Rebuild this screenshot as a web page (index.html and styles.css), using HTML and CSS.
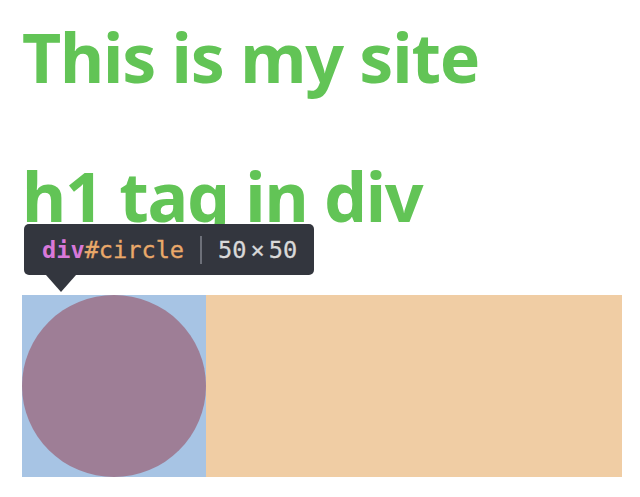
FILE: index.html
```html
<!DOCTYPE html>
<html>
<head>
<meta charset="utf-8">
<link rel="stylesheet" href="styles.css">
</head>
<body>
<main class="page">
  <h1 class="title">This is my site</h1>
  <div class="wrap">
    <h1 class="title second">h1 tag in div</h1>
  </div>
  <div class="row">
    <div class="content">
      <div class="circle"></div>
    </div>
    <div class="margin"></div>
  </div>
</main>
<div class="tip">
  <span class="sel"><span class="tag">div</span><span class="id">#circle</span></span>
  <span class="sep"></span>
  <span class="dim">50<span class="x">×</span>50</span>
  <span class="arrow"></span>
</div>
</body>
</html>
```
FILE: styles.css
```css
html, body {
  margin: 0;
  padding: 0;
  background: #ffffff;
}
.page {
  padding: 9px 0 0 22px;
}
.title {
  margin: 0;
  font-family: "Noto Sans", sans-serif;
  font-weight: 700;
  font-size: 68px;
  line-height: 96px;
  height: 96px;
  letter-spacing: -1.2px;
  color: #62c456;
  white-space: nowrap;
}
.second {
  margin-top: 43px;
}
.row {
  display: flex;
  margin-top: 51px;
  width: 600px;
  height: 182px;
}
.content {
  width: 184px;
  height: 182px;
  background: #a7c4e4;
}
.circle {
  width: 184px;
  height: 182px;
  border-radius: 50%;
  background: #9e7e96;
}
.margin {
  flex: 1;
  background: #f0cda4;
}
.tip {
  position: absolute;
  left: 24px;
  top: 224px;
  width: 290px;
  height: 51px;
  box-sizing: border-box;
  background: #33363e;
  border-radius: 5px;
  display: flex;
  align-items: center;
  padding-left: 18px;
  font-family: "DejaVu Sans Mono", monospace;
  font-size: 23.6px;
  color: #d9d9d9;
  -webkit-text-stroke: 0.3px currentColor;
}
.tag {
  color: #d878d9;
  font-weight: bold;
  -webkit-text-stroke: 0;
}
.id {
  color: #eaa96a;
}
.sep {
  width: 2px;
  height: 28px;
  background: #6d7079;
  margin: 0 16px 0 16px;
}
.dim .x {
  margin: 0 4px;
}
.arrow {
  position: absolute;
  left: 22px;
  top: 51px;
  width: 0;
  height: 0;
  border-left: 15px solid transparent;
  border-right: 15px solid transparent;
  border-top: 17px solid #33363e;
}
```
